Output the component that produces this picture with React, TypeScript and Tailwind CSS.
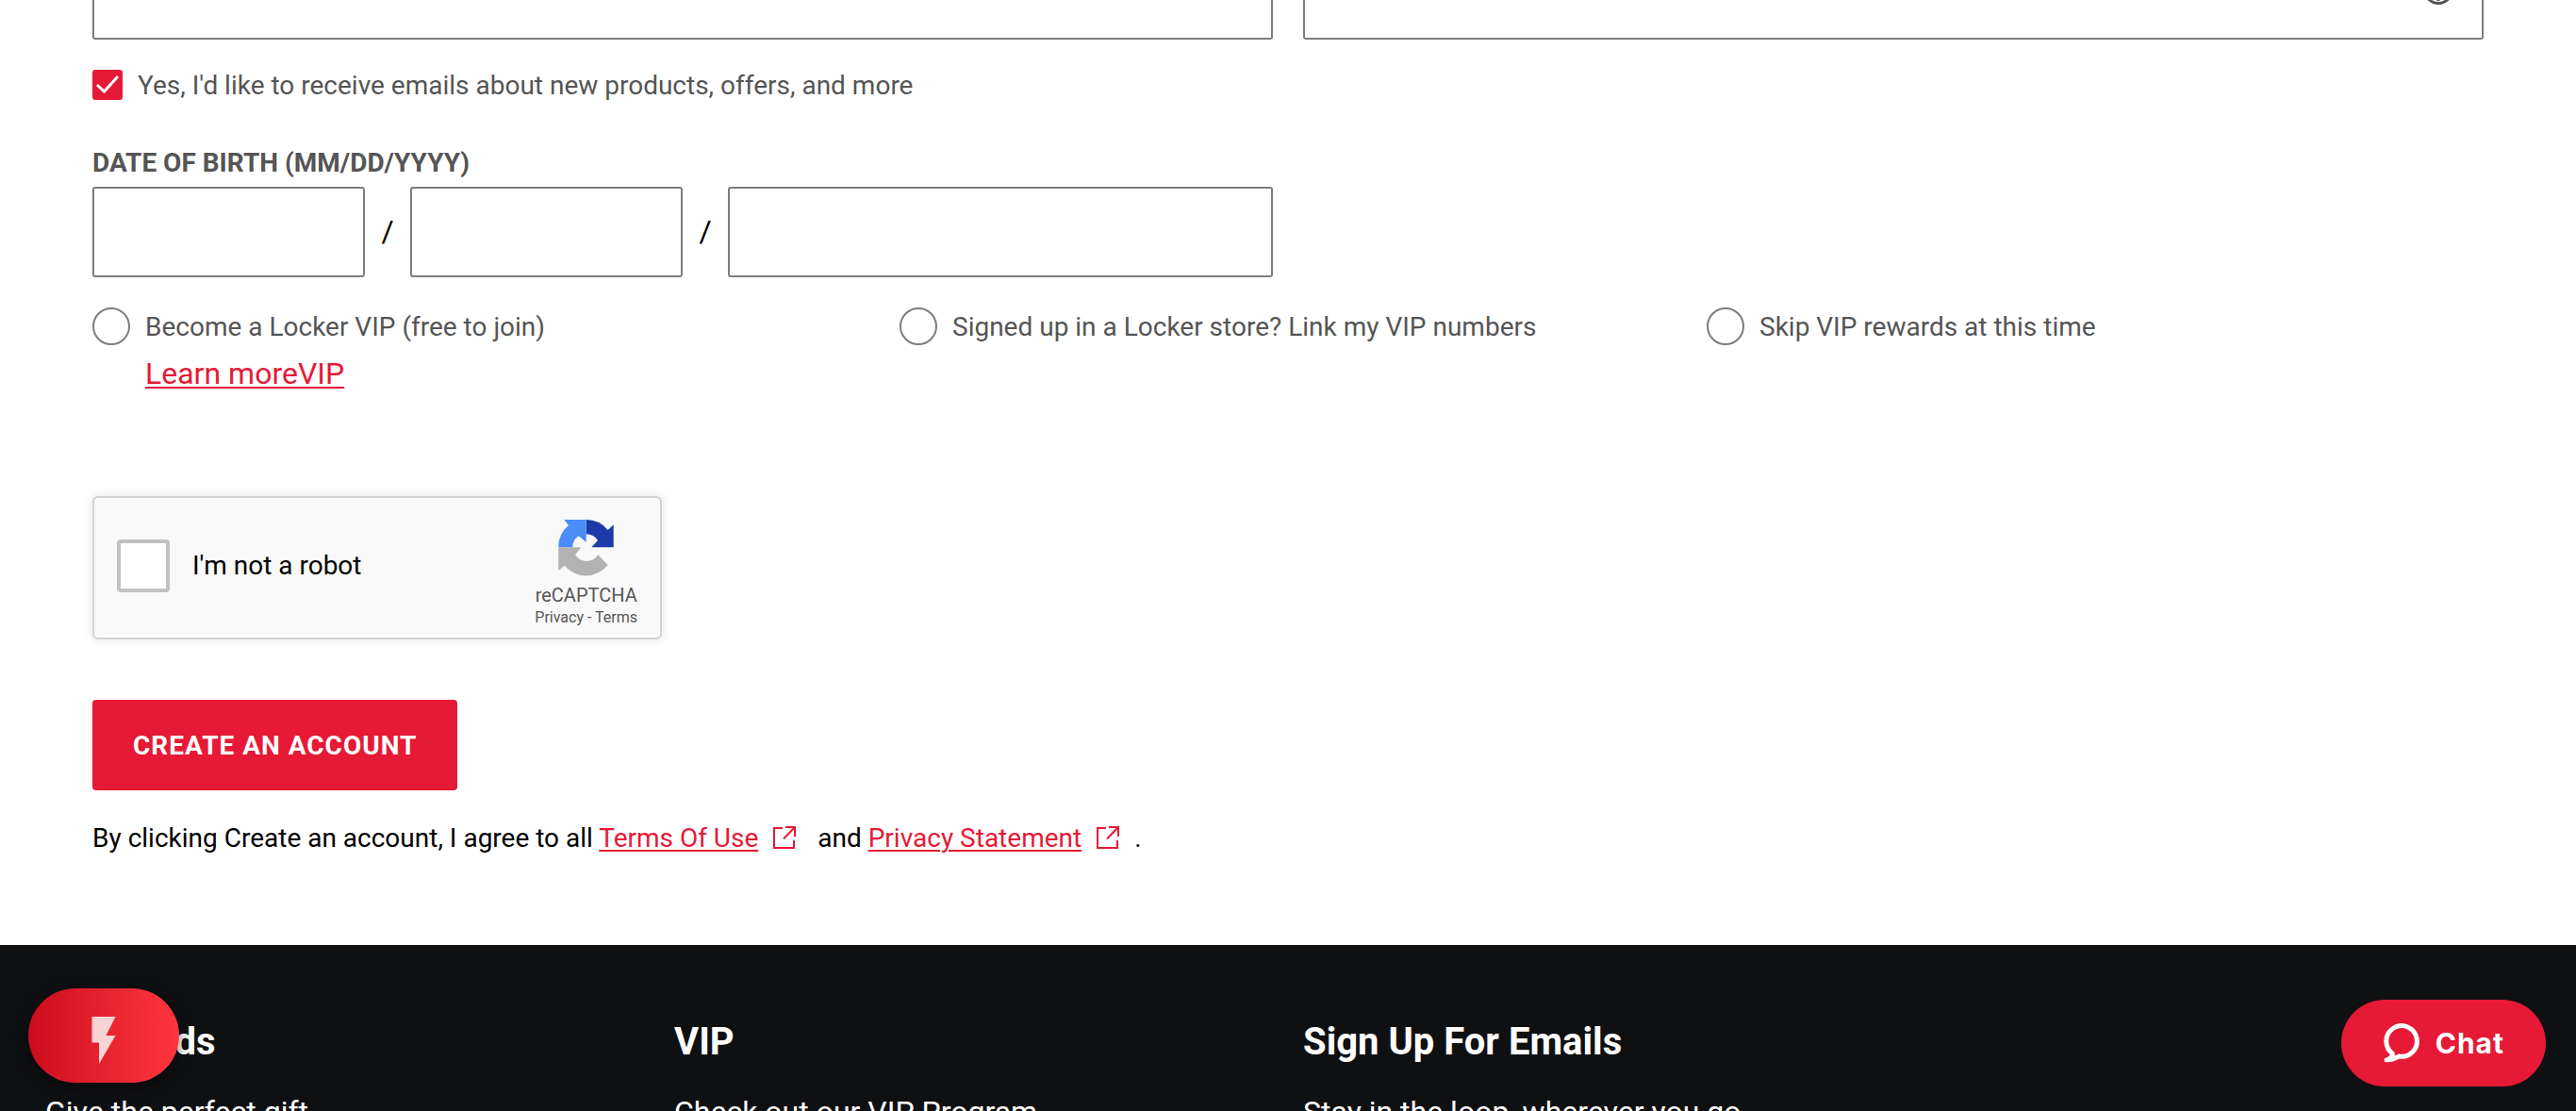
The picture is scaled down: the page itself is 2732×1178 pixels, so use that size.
import type { ReactNode } from "react";

const fieldClass =
  "min-w-0 border-2 border-[#7d7d7d] bg-white px-4 text-[28px] text-[#555] outline-none";

function ExternalIcon() {
  return (
    <svg viewBox="0 0 24 24" className="mx-4 inline-block size-6 align-[-2px]" fill="none" stroke="currentColor" strokeWidth="2" aria-hidden="true">
      <path d="M10 2H1V23H22V15" />
      <path d="M13 1H23V11M23 1L11 13.5" />
    </svg>
  );
}

function RecaptchaLogo() {
  return (
    <svg viewBox="0 0 60 60" className="size-15" aria-hidden="true">
      <path fill="#1c3aa9" d="M29.700 0A29.500 29.500 0 0 1 52.700 11L58.700 5.300V29.300H35.300L42 22A14.500 14.500 0 0 0 29.700 15.300Z" />
      <path fill="#4a8df8" d="M6.300 0H29.700V24L21.700 17.300A14.500 14.500 0 0 0 15.300 29.300H.3A29.500 29.500 0 0 1 11 6Z" />
      <path fill="#b2b2b2" d="M.3 29.300H24.300L18 37.300A14.500 14.500 0 0 0 42.300 37.300L52.700 48A29.500 29.500 0 0 1 6.700 48.700L.3 54Z" />
    </svg>
  );
}

function RadioOption({ id, label, children }: { id: string; label: string; children?: ReactNode }) {
  return (
    <div className="flex items-start gap-4">
      <input id={id} type="radio" name="vip" className="size-10 shrink-0 appearance-none rounded-full border-2 border-[#7d7d7d] bg-white checked:border-[12px] checked:border-[#e61936]" />
      <div>
        <label htmlFor={id} className="block text-[28px] leading-[42px] text-[#555]">{label}</label>
        {children}
      </div>
    </div>
  );
}

function FooterColumn({ title, text }: { title: string; text: string }) {
  return (
    <section>
      <h2 className="text-[40px] font-bold leading-[52px]">{title}</h2>
      <p className="mt-7 text-[32px] leading-10">{text}</p>
    </section>
  );
}

const linkClass = "text-[#e61936] underline decoration-2 underline-offset-3";

export default function App() {
  return (
    <div className="relative h-screen overflow-hidden bg-white font-[Roboto,sans-serif] text-black">
      <form className="px-[98px]" onSubmit={(e) => e.preventDefault()}>
        <div className="grid grid-cols-2 gap-8">
          <input aria-label="Email" className={`${fieldClass} h-[42px] rounded-b-[3px] border-t-0`} />
          <div className="relative grid">
            <input aria-label="Password" type="password" className={`${fieldClass} h-[42px] rounded-b-[3px] border-t-0`} />
            <button type="button" aria-label="Show password" className="absolute right-8 -top-[27px]">
              <svg viewBox="0 0 32 32" className="size-8" fill="none" stroke="#555" strokeWidth="3" aria-hidden="true">
                <circle cx="16" cy="16" r="14.5" />
                <path d="M16 8v12M16 25v3" />
              </svg>
            </button>
          </div>
        </div>

        <div className="mt-8 flex h-8 items-center gap-4">
          <span className="relative grid size-8">
            <input id="emails" type="checkbox" defaultChecked className="peer size-8 appearance-none rounded-[3px] border-2 border-[#7d7d7d] bg-white checked:border-[#e61936] checked:bg-[#e61936]" />
            <svg viewBox="0 0 32 32" className="pointer-events-none absolute inset-0 hidden size-8 peer-checked:block" fill="none" stroke="#fff" strokeWidth="3" aria-hidden="true">
              <path d="M5 16l7.500 7L27 7" />
            </svg>
          </span>
          <label htmlFor="emails" className="pt-0.5 text-[28px] leading-8 text-[#555]">
            Yes, I'd like to receive emails about new products, offers, and more
          </label>
        </div>

        <fieldset className="mt-12">
          <legend className="text-[28px] font-bold leading-[38px] text-[#555]">DATE OF BIRTH (MM/DD/YYYY)</legend>
          <div className="mt-1.5 grid grid-cols-2 gap-8">
            <div className="grid grid-cols-[1fr_48px_1fr_48px_2fr] items-center text-center text-[32px]">
              <input aria-label="Month" className={`${fieldClass} h-24 rounded-[3px]`} />
              <span className="pb-0.5">/</span>
              <input aria-label="Day" className={`${fieldClass} h-24 rounded-[3px]`} />
              <span className="pb-0.5">/</span>
              <input aria-label="Year" className={`${fieldClass} h-24 rounded-[3px]`} />
            </div>
          </div>
        </fieldset>

        <div className="mt-8 grid grid-cols-3 gap-8">
          <RadioOption id="join" label="Become a Locker VIP (free to join)">
            <a href="#vip" className={`${linkClass} mt-1 block text-[32px] leading-12`}>Learn moreVIP</a>
          </RadioOption>
          <RadioOption id="link" label="Signed up in a Locker store? Link my VIP numbers" />
          <RadioOption id="skip" label="Skip VIP rewards at this time" />
        </div>

        <div className="mt-[106px] flex h-[152px] w-[604px] items-center rounded-md border-2 border-[#d3d3d3] bg-[#f9f9f9] px-6 pb-1 shadow-[0_0_8px_2px_rgba(0,0,0,0.08)]">
          <input id="robot" type="checkbox" className="size-14 appearance-none rounded-sm border-4 border-[#c1c1c1] bg-white" />
          <label htmlFor="robot" className="ml-6 text-[28px]">I'm not a robot</label>
          <div className="ml-auto flex flex-col items-center self-start pt-[23px] text-[#555]">
            <RecaptchaLogo />
            <span className="mt-1.5 text-xl leading-7">reCAPTCHA</span>
            <span className="text-base leading-5"><a href="#privacy">Privacy</a> - <a href="#terms">Terms</a></span>
          </div>
        </div>

        <button type="submit" className="mt-16 block h-24 rounded-sm bg-[#e61936] px-[43px] pt-0.5 text-[28px] font-bold tracking-[1px] text-white">
          CREATE AN ACCOUNT
        </button>

        <p className="mt-8 text-[28px] leading-[38px]">
          By clicking Create an account, I agree to all <a href="#terms" className={linkClass}>Terms Of Use</a>
          <span className="text-[#e61936]"><ExternalIcon /></span> and <a href="#statement" className={linkClass}>Privacy Statement</a>
          <span className="text-[#e61936]"><ExternalIcon /></span>.
        </p>
      </form>

      <footer className="mt-[94px] grid grid-cols-4 gap-8 bg-[#0f1012] px-12 pb-16 pt-[77px] text-white">
        <FooterColumn title="Gift Cards" text="Give the perfect gift" />
        <FooterColumn title="VIP" text="Check out our VIP Program" />
        <FooterColumn title="Sign Up For Emails" text="Stay in the loop, wherever you go" />
      </footer>

      <button type="button" aria-label="Quick actions" className="absolute bottom-[30px] left-[30px] flex h-[100px] w-40 items-center justify-center rounded-full bg-linear-to-r from-[#cc0a1c] to-[#ff353f] pt-2.5 shadow-[0_4px_16px_rgba(0,0,0,0.5)]">
        <svg viewBox="0 0 24 24" className="size-15" fill="#fff" fillOpacity="0.8" aria-hidden="true">
          <path d="M7 2v11h3v9l7-12h-4l4-8z" />
        </svg>
      </button>

      <button type="button" className="absolute bottom-[26px] right-8 flex h-[92px] items-center gap-4 rounded-full bg-[#e61936] px-11 font-[Inter,sans-serif] text-[30px] font-bold tracking-[1px] text-white">
        <svg viewBox="0 0 40 42" className="h-[42px] w-10" fill="none" stroke="#fff" strokeWidth="5" strokeLinecap="round" strokeLinejoin="round" aria-hidden="true">
          <path d="M10.500 32.200A16.300 16.300 0 1 1 17 35C14 37 9 39 4 38.800C8 37.500 10.500 36 10.500 32.200Z" />
        </svg>
        Chat
      </button>
    </div>
  );
}
